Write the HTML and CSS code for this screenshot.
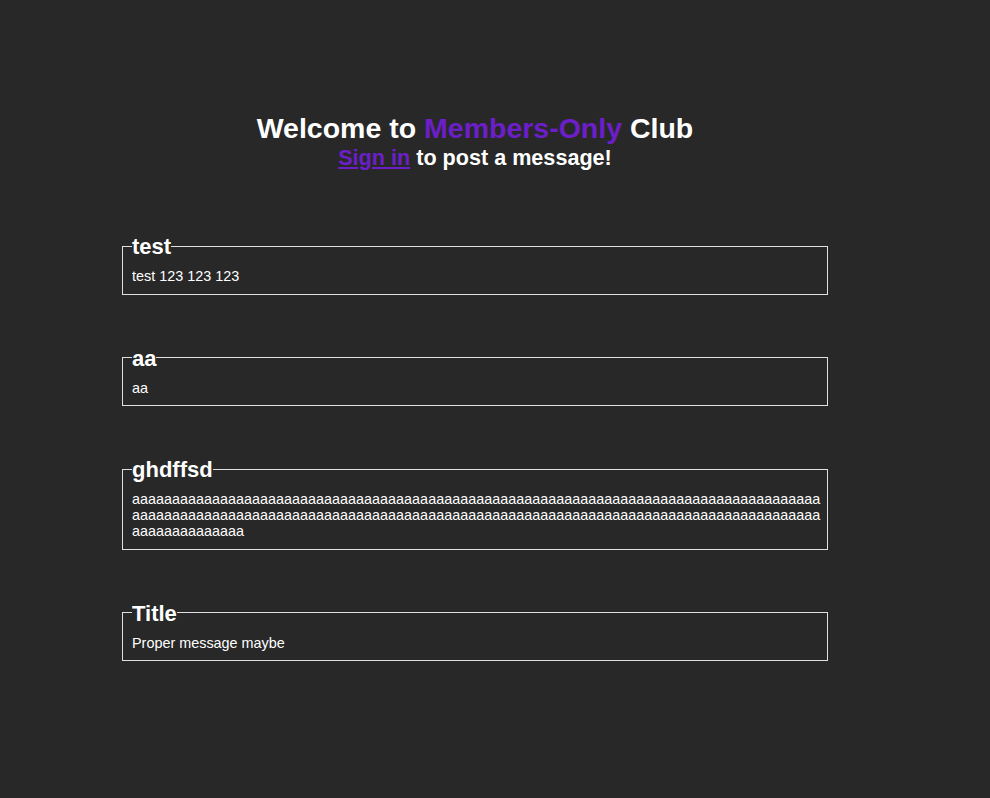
FILE: index.html
```html
<!DOCTYPE html>
<html lang="en">
<head>
<meta charset="utf-8">
<title>Members-Only Club</title>
<link rel="stylesheet" href="styles.css">
</head>
<body>
<main class="page">
  <header class="hero">
    <h1 class="hero-title">Welcome to <span class="accent">Members-Only</span> Club</h1>
    <p class="hero-sub"><a class="accent-link" href="#">Sign in</a> to post a message!</p>
  </header>
  <section class="messages">
    <fieldset class="message">
      <legend class="message-title">test</legend>
      <p class="message-body">test 123 123 123</p>
    </fieldset>
    <fieldset class="message">
      <legend class="message-title">aa</legend>
      <p class="message-body">aa</p>
    </fieldset>
    <fieldset class="message">
      <legend class="message-title">ghdffsd</legend>
      <p class="message-body">aaaaaaaaaaaaaaaaaaaaaaaaaaaaaaaaaaaaaaaaaaaaaaaaaaaaaaaaaaaaaaaaaaaaaaaaaaaaaaaaaaaaaaaaaaaaaaaaaaaaaaaaaaaaaaaaaaaaaaaaaaaaaaaaaaaaaaaaaaaaaaaaaaaaaaaaaaaaaaaaaaaaaaaaaaaaaaaaaaaaaaaaaa</p>
    </fieldset>
    <fieldset class="message">
      <legend class="message-title">Title</legend>
      <p class="message-body">Proper message maybe</p>
    </fieldset>
  </section>
</main>
</body>
</html>
```
FILE: styles.css
```css
html, body {
  margin: 0;
  padding: 0;
  background: #282828;
}
body {
  font-family: "Liberation Sans", Arial, sans-serif;
  font-size: 14.4px;
  color: #ffffff;
  min-height: 798px;
}
.page {
  width: 706px;
  margin-left: 122px;
  padding-top: 112px;
  display: flex;
  flex-direction: column;
}
.hero {
  text-align: center;
}
.hero-title {
  margin: 0;
  font-size: 28.5px;
  font-weight: bold;
  line-height: normal;
}
.accent {
  color: #6c1fc8;
}
.hero-sub {
  margin: 0;
  font-size: 21.6px;
  font-weight: bold;
  line-height: normal;
}
.accent-link {
  color: #6c1fc8;
  text-decoration: underline;
}
.messages {
  margin-top: 61px;
  display: flex;
  flex-direction: column;
  gap: 49px;
}
.message {
  margin: 0;
  padding: 8px 5px 9.5px 9px;
  border: 1px solid #e0e0e0;
  min-width: 0;
}
.message-title {
  padding: 2px 0 0;
  font-size: 22px;
  font-weight: bold;
  line-height: normal;
}
.message-body {
  margin: 0;
  line-height: normal;
  word-break: break-all;
}
```
